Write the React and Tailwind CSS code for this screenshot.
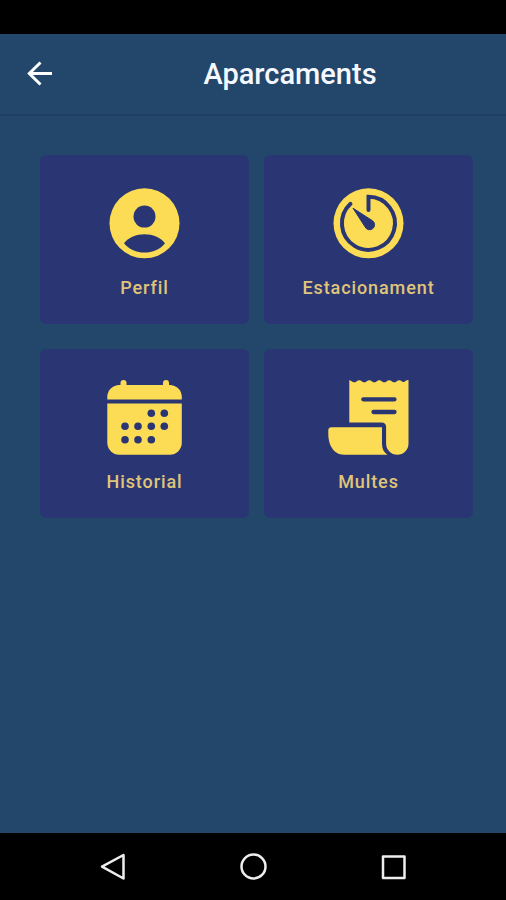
import React from "react";

function ProfileIcon() {
  return (
    <svg viewBox="-1 0 84 80" className="h-20 w-[84px]" aria-hidden="true">
      <circle cx="40.500" cy="40.300" r="35" fill="#fddc55" />
      <circle cx="40.500" cy="33.600" r="11" fill="#293673" />
      <path d="M20 60.300C25 54 32 51.300 40.500 51.300S56 54 61 60.300C56 66.800 48.500 69.600 40.500 69.600S25 66.500 20 60.300Z" fill="#293673" />
    </svg>
  );
}

function TimerIcon() {
  return (
    <svg viewBox="-1 0 84 80" className="h-20 w-[84px]" aria-hidden="true">
      <circle cx="40.500" cy="40.300" r="35" fill="#fddc55" />
      <path
        d="M40.500 27V13.800A26.500 26.500 0 1 1 22.500 20.800"
        fill="none"
        stroke="#293673"
        strokeWidth="4"
        strokeLinecap="round"
        strokeLinejoin="miter"
      />
      <path d="M25 25.200L44.300 37.600A5 5 0 1 1 37 43.800Z" fill="#293673" stroke="#293673" strokeLinejoin="round" />
    </svg>
  );
}

function CalendarIcon() {
  const dots = [
    [47.3, 36.3], [60.3, 36.3],
    [21, 49.3], [34, 49.3], [47.3, 49.3], [60.3, 49.3],
    [21, 62.7], [34, 62.7], [47.3, 62.7],
  ];
  return (
    <svg viewBox="-1 0 84 80" className="h-20 w-[84px]" aria-hidden="true">
      <rect x="3.300" y="8" width="74.500" height="69.700" rx="12" fill="#fddc55" />
      <path d="M19.500 6V12M62 6V12" stroke="#fddc55" strokeWidth="6" strokeLinecap="round" />
      <path d="M2 24.500H79" stroke="#293673" strokeWidth="4" />
      {dots.map(([x, y]) => (
        <circle key={x + "-" + y} cx={x} cy={y} r="3.800" fill="#293673" />
      ))}
    </svg>
  );
}

function ReceiptIcon() {
  return (
    <svg viewBox="-1 0 84 80" className="h-20 w-[84px]" aria-hidden="true">
      <path
        d="M21.300 3Q22 3 24 4.500Q26.300 6.200 28.500 4.500Q31.300 2 34 4.500Q36.300 6.200 38.500 4.500Q41.300 2 44 4.500Q46.300 6.200 48.500 4.500Q51.300 2 54 4.500Q56.300 6.200 58.500 4.500Q61.300 2 64 4.500Q66.300 6.200 68.500 4.500Q71.300 2 74 4.500Q76 6 78 3.500Q79 3 80.500 3V66.500A11.200 11.200 0 0 1 58.100 66.500V50Q58.100 45.500 53.600 45.500H21.300Z"
        fill="#fddc55"
      />
      <path d="M35.300 22.300H66.500M45.500 35H66.500" stroke="#293673" strokeWidth="4.300" strokeLinecap="round" />
      <path d="M3.500 50.300H54V67C54 72 56 75.500 59.500 77.700H16C5 77.700 0.300 67 0.300 57V53.500Q0.300 50.300 3.500 50.300Z" fill="#fddc55" />
    </svg>
  );
}

const tiles = [
  { label: "Perfil", Icon: ProfileIcon },
  { label: "Estacionament", Icon: TimerIcon },
  { label: "Historial", Icon: CalendarIcon },
  { label: "Multes", Icon: ReceiptIcon },
];

export default function App() {
  return (
    <div className="flex min-h-screen flex-col bg-[#22476b] font-['Roboto',sans-serif]">
      <div className="h-[34px] bg-black" />
      <header className="flex h-[82px] items-center border-b-2 border-[#1e3f63]">
        <button type="button" aria-label="Enrere" className="flex h-20 w-[74px] items-center pl-[26px]">
          <svg viewBox="0 0 28 28" className="size-7" fill="none" stroke="#fff" strokeWidth="3" aria-hidden="true">
            <path d="M26 13.500H3M14.500 2.500L3.300 13.500L14.500 24.500" />
          </svg>
        </button>
        <h1 className="flex-1 text-center text-[29px] leading-8 font-medium text-[#f6f8ff]">Aparcaments</h1>
      </header>
      <main className="grid flex-1 grid-cols-2 content-start gap-x-[15px] gap-y-[25px] pt-[39px] pr-[33px] pl-10">
        {tiles.map(({ label, Icon }) => (
          <button
            key={label}
            type="button"
            className="flex flex-col items-center gap-[13px] rounded-md bg-[#293673] pt-7 pb-6"
          >
            <Icon />
            <span className="text-lg leading-6 font-medium tracking-wider text-[#e0c578]">{label}</span>
          </button>
        ))}
      </main>
      <nav aria-label="Sistema" className="flex h-[67px] items-center justify-center gap-28 bg-black">
        <button type="button" aria-label="Enrere" className="flex size-7">
          <svg viewBox="0 0 28 28" className="size-7" fill="none" stroke="#eee" strokeWidth="2.500" strokeLinejoin="round" aria-hidden="true">
            <path d="M24.500 2V25.500L3 13.700Z" />
          </svg>
        </button>
        <button type="button" aria-label="Inici" className="flex size-7">
          <svg viewBox="0 0 28 28" className="size-7" fill="none" stroke="#eee" strokeWidth="2.500" aria-hidden="true">
            <circle cx="14.500" cy="13.500" r="12" />
          </svg>
        </button>
        <button type="button" aria-label="Recents" className="flex size-7">
          <svg viewBox="0 0 28 28" className="size-7" fill="none" stroke="#eee" strokeWidth="2.500" strokeLinejoin="round" aria-hidden="true">
            <rect x="4" y="3.500" width="21.500" height="21.500" />
          </svg>
        </button>
      </nav>
    </div>
  );
}
